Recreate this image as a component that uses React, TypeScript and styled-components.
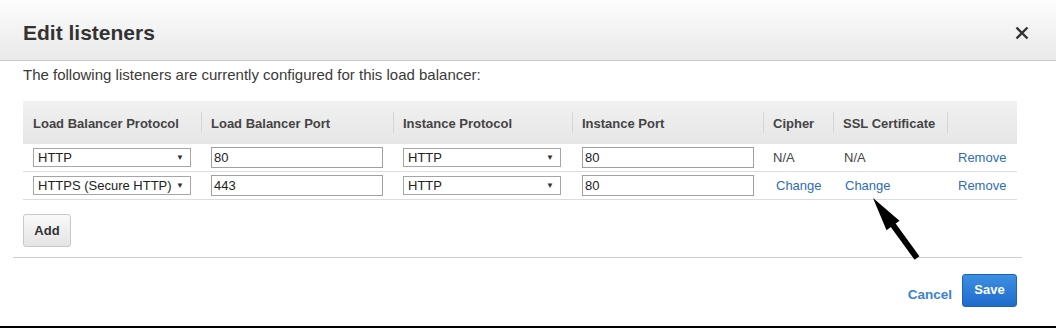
import { Fragment } from 'react';
import styled, { createGlobalStyle } from 'styled-components';

const GlobalStyle = createGlobalStyle`
  html, body {
    margin: 0;
    padding: 0;
    background: #fff;
  }
  body {
    font-family: "Liberation Sans", Arial, sans-serif;
    font-size: 13px;
    color: #333;
  }
`;

const Page = styled.div`
  position: relative;
  width: 1056px;
  height: 328px;
  box-sizing: border-box;
  border-bottom: 2px solid #000;
  display: flex;
  flex-direction: column;
  overflow: hidden;
`;

const Header = styled.header`
  height: 61px;
  flex-shrink: 0;
  display: flex;
  align-items: center;
  justify-content: space-between;
  padding: 6px 27px 0 23px;
  box-sizing: border-box;
  background: linear-gradient(#fdfdfd, #e9e9e9);
  border-bottom: 1px solid #c9c9c9;
  h1 {
    margin: 0;
    font-size: 21px;
    font-weight: 700;
    color: #333;
  }
`;

const CloseButton = styled.button`
  border: 0;
  background: transparent;
  padding: 0;
  width: 14px;
  height: 14px;
  display: flex;
  cursor: pointer;
`;

const Body = styled.div`
  padding: 5px 39px 0 23px;
  p {
    margin: 0;
    font-size: 15px;
    line-height: 18px;
    color: #3a3a3a;
  }
`;

const Grid = styled.div`
  margin-top: 17px;
  display: grid;
  grid-template-columns: 178px 192px 179px 191px 70px 114px 70px;
`;

const HeadCell = styled.div<{ $divider?: boolean }>`
  position: relative;
  height: 43px;
  display: flex;
  align-items: center;
  padding: 1px 0 0 10px;
  box-sizing: border-box;
  background: linear-gradient(#f1f1f1, #e6e6e6);
  font-weight: 700;
  color: #444;
  &::before {
    content: '';
    display: ${(p) => (p.$divider ? 'block' : 'none')};
    position: absolute;
    left: 0;
    top: 11px;
    bottom: 11px;
    width: 1px;
    background: #d6d6d6;
  }
`;

const Cell = styled.div<{ $pad?: number }>`
  height: 27px;
  display: flex;
  align-items: center;
  padding-left: ${(p) => p.$pad ?? 10}px;
  border-bottom: 1px solid #dcdcdc;
  color: #444;
`;

const Select = styled.div`
  width: 158px;
  height: 19px;
  box-sizing: border-box;
  border: 1px solid #a6a6a6;
  background: #fff;
  display: flex;
  align-items: center;
  justify-content: space-between;
  padding: 0 6px 0 4px;
  color: #222;
  span.caret {
    font-size: 8px;
    color: #333;
  }
`;

const Input = styled.div`
  width: 172px;
  height: 21px;
  box-sizing: border-box;
  border: 1px solid #a0a0a0;
  background: #fff;
  display: flex;
  align-items: center;
  padding-left: 2px;
  color: #222;
`;

const Link = styled.a`
  color: #2d6db5;
  text-decoration: none;
  cursor: pointer;
`;

const AddButton = styled.button`
  margin-top: 14px;
  width: 48px;
  height: 33px;
  border: 1px solid #c8c8c8;
  border-radius: 3px;
  background: linear-gradient(#f9f9f9, #e4e4e4);
  font-family: inherit;
  font-size: 13px;
  font-weight: 700;
  color: #333;
  padding: 0;
`;

const Divider = styled.hr`
  margin: 10px 34px 0 13px;
  border: 0;
  border-top: 1px solid #cfcfcf;
  height: 0;
`;

const Footer = styled.div`
  display: flex;
  justify-content: flex-end;
  align-items: center;
  gap: 10px;
  padding: 16px 39px 0 0;
`;

const CancelLink = styled.a`
  margin-top: 7px;
  font-size: 13.5px;
  font-weight: 700;
  color: #3a82d2;
  cursor: pointer;
`;

const SaveButton = styled.button`
  width: 55px;
  height: 33px;
  border: 1px solid #1d62b8;
  border-radius: 3px;
  background: linear-gradient(#3d8fe2, #1f6bcb);
  color: #fff;
  font-family: inherit;
  font-size: 13px;
  font-weight: 700;
  padding: 0 0 3px;
`;

const Annotation = styled.svg`
  position: absolute;
  left: 0;
  top: 0;
  pointer-events: none;
`;

type Row = {
  lbProtocol: string;
  lbPort: string;
  instProtocol: string;
  instPort: string;
  editable: boolean;
};

const rows: Row[] = [
  { lbProtocol: 'HTTP', lbPort: '80', instProtocol: 'HTTP', instPort: '80', editable: false },
  { lbProtocol: 'HTTPS (Secure HTTP)', lbPort: '443', instProtocol: 'HTTP', instPort: '80', editable: true },
];

const columns = [
  'Load Balancer Protocol',
  'Load Balancer Port',
  'Instance Protocol',
  'Instance Port',
  'Cipher',
  'SSL Certificate',
  '',
];

const Dropdown = ({ value }: { value: string }) => (
  <Select>
    <span>{value}</span>
    <span className="caret">▼</span>
  </Select>
);

const App = () => {
  return (
    <Page>
      <GlobalStyle />
      <Header>
        <h1>Edit listeners</h1>
        <CloseButton aria-label="Close">
          <svg width="14" height="14" viewBox="0 0 14 14">
            <path d="M1.5 1.5 L12.5 12.5 M12.5 1.5 L1.5 12.5" stroke="#333" strokeWidth="2.4" />
          </svg>
        </CloseButton>
      </Header>
      <Body>
        <p>The following listeners are currently configured for this load balancer:</p>
        <Grid>
          {columns.map((c, i) => (
            <HeadCell key={i} $divider={i > 0}>
              {c}
            </HeadCell>
          ))}
          {rows.map((r, i) => (
            <Fragment key={i}>
              <Cell>
                <Dropdown value={r.lbProtocol} />
              </Cell>
              <Cell>
                <Input>{r.lbPort}</Input>
              </Cell>
              <Cell>
                <Dropdown value={r.instProtocol} />
              </Cell>
              <Cell>
                <Input>{r.instPort}</Input>
              </Cell>
              <Cell $pad={r.editable ? 13 : 10}>
                {r.editable ? <Link>Change</Link> : 'N/A'}
              </Cell>
              <Cell $pad={r.editable ? 12 : 11}>
                {r.editable ? <Link>Change</Link> : 'N/A'}
              </Cell>
              <Cell $pad={11}>
                <Link>Remove</Link>
              </Cell>
            </Fragment>
          ))}
        </Grid>
        <AddButton>Add</AddButton>
      </Body>
      <Divider />
      <Footer>
        <CancelLink>Cancel</CancelLink>
        <SaveButton>Save</SaveButton>
      </Footer>
      <Annotation width="1056" height="328" viewBox="0 0 1056 328">
        <line x1="893" y1="225" x2="917" y2="258" stroke="#000" strokeWidth="6" />
        <polygon points="873,198 899.5,220.8 886.5,230.2" fill="#000" />
      </Annotation>
    </Page>
  );
};

export default App;
